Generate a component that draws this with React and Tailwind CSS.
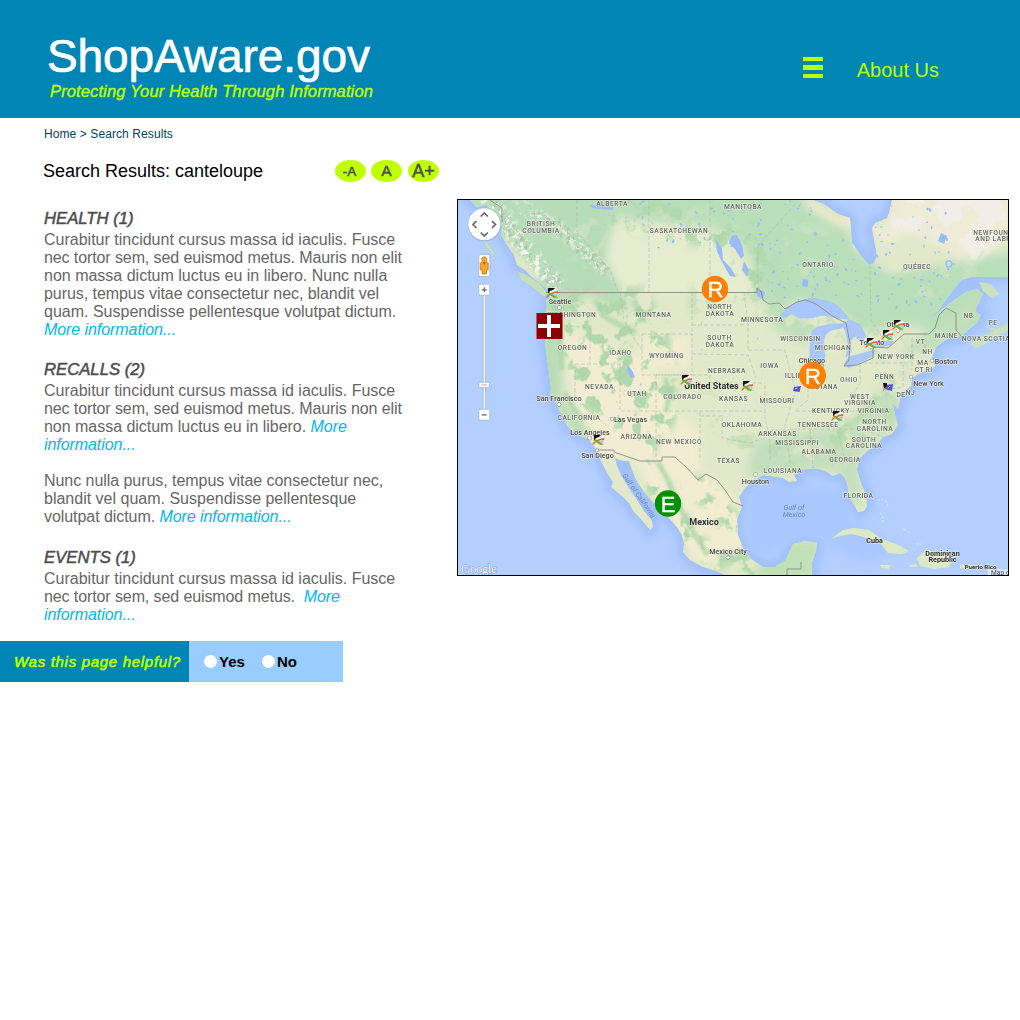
import React from "react";

const STATE_LABELS = [
  ["ALBERTA", 612, 205], ["MANITOBA", 743, 208], ["BRITISH", 541, 225], ["COLUMBIA", 541, 232],
  ["SASKATCHEWAN", 679, 232], ["ONTARIO", 818, 266], ["QUÉBEC", 917, 268.5],
  ["NEWFOUNDLAND", 1003, 234], ["AND LABRADOR", 1003, 240.5],
  ["WASHINGTON", 572, 316], ["OREGON", 572.5, 349.5], ["IDAHO", 620.5, 354.5], ["MONTANA", 653.5, 316.5],
  ["WYOMING", 666.5, 357], ["NORTH", 719.5, 308.5], ["DAKOTA", 720, 315], ["SOUTH", 719.5, 339.5],
  ["DAKOTA", 720, 346], ["MINNESOTA", 762, 321.5], ["WISCONSIN", 800.5, 340], ["MICHIGAN", 833, 349.5],
  ["IOWA", 769.5, 367.5], ["NEBRASKA", 727, 372], ["ILLINOIS", 800, 377], ["INDIANA", 823, 388],
  ["OHIO", 849, 381], ["PENN", 884.5, 378.5], ["NEW YORK", 896, 358.5], ["VT", 920.5, 343.5],
  ["NH", 927.5, 353.5], ["MA", 923, 364], ["CT", 919.5, 371.5], ["RI", 929, 371.5], ["MAINE", 946.5, 337.5],
  ["NB", 968.5, 317], ["PE", 993, 324.5], ["NOVA SCOTIA", 986, 340], ["NEVADA", 599.5, 388.5],
  ["UTAH", 637, 395], ["COLORADO", 682.5, 398.5], ["KANSAS", 733.5, 400.5], ["MISSOURI", 777, 402.5],
  ["CALIFORNIA", 579, 419], ["ARIZONA", 636.5, 438], ["NEW MEXICO", 679, 443.5], ["OKLAHOMA", 742, 426],
  ["ARKANSAS", 777.5, 435], ["TENNESSEE", 818, 426.5], ["KENTUCKY", 831, 412.5], ["WEST", 860, 398],
  ["VIRGINIA", 860, 404.5], ["VIRGINIA", 873.5, 412.5], ["NORTH", 874.5, 423.5], ["CAROLINA", 875, 430],
  ["SOUTH", 864, 441], ["CAROLINA", 864, 447.5], ["MISSISSIPPI", 797, 444], ["ALABAMA", 819, 453.5],
  ["GEORGIA", 845, 461.5], ["TEXAS", 728.5, 462.5], ["LOUISIANA", 783, 472], ["FLORIDA", 858.5, 497],
  ["DE", 901, 396], ["NJ", 910.5, 394.5],
];

const CITY_LABELS = [
  ["Seattle", 560, 303.5, 559.5, 307.5], ["San Francisco", 559, 401, 559, 404.5], ["Las Vegas", 630.5, 421.5, 612, 419],
  ["Los Angeles", 590, 434.5, 589.5, 438], ["San Diego", 597.5, 458, 597, 450], ["Chicago", 812, 362.5, 822, 366],
  ["Toronto", 872, 344.5, 872, 347], ["Ottawa", 898, 326.5, 898, 330.5], ["Boston", 946, 363.5, 932, 361],
  ["New York", 928.5, 385.5, 911, 377], ["Houston", 755.5, 483.5, 755.5, 474.5], ["Mexico City", 728, 554, 728, 557.5],
];

const FLAGS = [[552, 293], [686, 380], [747, 386], [898, 325], [887, 335], [871, 343], [598, 440], [837, 416]];

function seeded(seed) {
  let s = seed;
  return () => {
    s = (s * 16807) % 2147483647;
    return s / 2147483647;
  };
}

function scatter(seed, count, x, y, w, h, min, max) {
  const r = seeded(seed);
  return Array.from({ length: count }, () => [x + r() * w, y + r() * h, min + r() * (max - min), min * 0.6 + r() * (max - min) * 0.5, r() * 180]);
}

const LAKES = [
  ...scatter(31, 60, 640, 200, 180, 50, 0.7, 2.2),
  ...scatter(77, 50, 770, 240, 100, 65, 0.7, 2),
  ...scatter(119, 60, 875, 205, 80, 105, 0.7, 2.1),
  ...scatter(401, 10, 640, 310, 150, 100, 0.5, 1.3),
];

function Blobs({ items, fill, opacity = 1 }) {
  return (
    <g fill={fill} opacity={opacity}>
      {items.map(([x, y, rx, ry, a], i) => (
        <ellipse key={i} cx={x} cy={y} rx={rx} ry={ry} transform={`rotate(${a} ${x} ${y})`} />
      ))}
    </g>
  );
}

/* Speckled fill: noise in one colour, kept inside the softened shape it is applied to. */
function Speckle({ id, frequency, seed, rgb, gain, cut, blur }) {
  const [r, g, b] = rgb.map((v) => v / 255);
  return (
    <filter id={id} x="-10%" y="-10%" width="120%" height="120%" colorInterpolationFilters="sRGB">
      <feTurbulence type="fractalNoise" baseFrequency={frequency} numOctaves="4" seed={seed} result="n" />
      <feColorMatrix in="n" type="matrix" values={`0 0 0 0 ${r} 0 0 0 0 ${g} 0 0 0 0 ${b} ${gain} 0 0 0 ${-cut}`} result="c" />
      <feGaussianBlur in="SourceAlpha" stdDeviation={blur} result="m" />
      <feComposite in="c" in2="m" operator="in" />
    </filter>
  );
}

const LAND =
  "M470 200L477 207L486 205L493 211L499 219L502 228L501 235L507 245L514 255L517 265L525 270L532 277L541 284L548 290L553 292L549 298L546 300L547 307L545 315L546 330L545 343L547 357L549 372L551 388L550 394L555 402L559 410L564 418L567 426L577 435L588 439L593 445L598 454L602 463L607 473L613 482L611 487L617 492L624 498L629 503L634 512L640 518L646 525L650 530L653 527L652 521L644 511L637 500L630 490L622 477L617 466L615 458L623 461L629 461L632 470L636 480L643 491L651 500L658 508L669 518L677 527L682 535L684 544L683 552L690 560L703 567L716 571L727 576L812 576L812 562L816 551L817 543L805 541L793 544L790 551L785 561L775 567L763 567L751 559L743 548L738 535L737 519L742 507L739 497L745 488L753 481L763 475L776 477L783 478L789 482L797 481L794 475L800 470L808 469L819 469L827 472L833 476L840 473L845 478L848 487L848 495L853 503L858 512L864 511L867 506L866 495L861 483L857 470L859 459L867 451L876 446L883 437L892 434L898 425L895 415L893 404L898 409L901 395L911 386L912 378L920 373L932 369L935 366L932 358L936 347L944 341L950 337L961 337L969 329L977 323L981 315L975 311L979 302L983 294L977 289L966 292L950 303L935 315L926 321L938 311L948 297L961 280L971 277L1009 277L1009 200L892 200L889 213L887 218L875 223L872 228L874 240L877 256L874 263L869 265L862 257L852 243L850 218L838 214L824 204L813 200Z";

function GoogleMap() {
  return (
    <svg viewBox="458 200 550 375" width="550" height="375" className="block">
      <defs>
        <clipPath id="land"><path d={LAND} /></clipPath>
        <filter id="soft" x="-30%" y="-30%" width="160%" height="160%" colorInterpolationFilters="sRGB"><feGaussianBlur stdDeviation="4" /></filter>
        <filter id="fine" x="-5%" y="-5%" width="110%" height="110%" colorInterpolationFilters="sRGB"><feGaussianBlur stdDeviation="1.6" /></filter>
        <filter id="shelf" x="-10%" y="-10%" width="120%" height="120%" colorInterpolationFilters="sRGB"><feGaussianBlur stdDeviation="3.5" /></filter>
        <Speckle id="woods" frequency="0.06" seed={4} rgb={[176, 216, 172]} gain={9} cut={4.7} blur={4} />
        <Speckle id="meadow" frequency="0.05" seed={9} rgb={[227, 234, 200]} gain={8} cut={4.5} blur={5} />
        <Speckle id="snow" frequency="0.2" seed={2} rgb={[243, 243, 240]} gain={9} cut={4.6} blur={3} />
        <Speckle id="snowShade" frequency="0.24" seed={12} rgb={[166, 186, 163]} gain={9} cut={5.2} blur={3} />
        <Speckle id="tundra" frequency="0.05" seed={21} rgb={[240, 238, 230]} gain={14} cut={6} blur={3} />
      </defs>
      <rect x="458" y="200" width="550" height="375" fill="#b3cfff" />
      <path d={LAND} fill="none" stroke="#a2c1f8" strokeWidth="13" filter="url(#shelf)" />
      <path d="M745 500Q755 480 790 488L845 490L855 520L900 550L870 562L800 535L770 555L745 545Z" fill="#a9c8fd" filter="url(#soft)" />
      <path d={LAND} fill="#e1e9ca" />
      <g clipPath="url(#land)">
        <g filter="url(#soft)">
          <path d="M445 185L612 185L618 215L608 240L605 262L622 290L628 312L610 308L596 297L575 298L562 305L560 325L562 400L556 400L540 395L538 270Z" fill="#b7dcb8" />
          <path d="M610 185L830 185L855 250L890 275L1020 250L1020 340L962 345L915 325L860 330L840 310L800 300L770 312L757 290L752 262L742 245L710 226L660 222L610 215Z" fill="#b9deba" />
          <path d="M612 226L660 232L715 236L742 265L752 285L745 296L625 292L608 262Z" fill="#e6edcf" />
          <path d="M805 200L838 220L852 226" fill="none" stroke="#efe9cd" strokeWidth="11" />
          <path d="M870 232L890 222L895 190L1020 190L1020 225L990 236L975 258L960 262L945 246L930 243L910 232L885 245Z" fill="#eeebd6" />
          <path d="M562 330L580 335L612 342L620 360L640 350L660 385L672 410L700 430L700 470L736 500L742 545L700 565L660 505L635 460L600 455L575 405Z" fill="#f2edd2" />
          <path d="M640 335L690 335L690 368L648 370Z" fill="#f1ecd0" />
          <path d="M545 300L556 314L559 340L556 372L562 400L593 435L580 441L548 400Z" fill="#b9dcb5" />
          <path d="M762 300L795 315L810 325L808 345L775 330Z" fill="#bfdfbb" />
          <path d="M755 440L850 425L885 385L900 400L895 425L858 455L862 510L850 500L838 470L745 475Z" fill="#c3dfbc" />
          <path d="M898 355L945 318L965 300L980 290L975 325L935 350Z" fill="#c0dfba" />
          <path d="M785 540L820 540L815 580L742 580L755 570Z" fill="#c2e0b6" />
        </g>
        <g filter="url(#woods)" stroke="#000" fill="none">
          <path d="M560 300L640 298L660 340L665 380L668 415L650 440L590 400L575 360Z" fill="#000" strokeWidth="20" />
          <path d="M690 300L760 300L900 350L880 420L770 460L700 400" strokeWidth="24" opacity=".55" />
          <path d="M640 462L665 500L690 540L725 565M690 480L730 520L735 555L760 572" strokeWidth="20" />
          <path d="M600 205L745 238L760 290" strokeWidth="35" />
        </g>
        <g filter="url(#fine)" fill="none" stroke="#a7d3a6">
          <path d="M553 305L559 320L560 345L562 370" strokeWidth="5" opacity=".7" />
          <path d="M565 393L572 406L584 421" strokeWidth="5" opacity=".75" />
          <path d="M665 378L670 392L666 412M658 462L668 480L676 500L692 530L708 555" strokeWidth="5" opacity=".75" />
          <path d="M595 300L604 316L620 325L636 333M633 300L645 322" strokeWidth="6" opacity=".65" />
          <path d="M838 435L862 415L876 398" strokeWidth="5" opacity=".5" />
        </g>
        <g filter="url(#meadow)">
          <path d="M540 215H610L600 260L560 260ZM560 300L610 320L600 345L560 330Z" opacity=".35" />
          <path d="M750 300L860 340L890 420L850 465L770 460L700 370Z" opacity=".7" />
          <path d="M640 205H740V250H660ZM780 210L830 225L840 290L780 280ZM890 270L1000 240L960 300L910 310Z" opacity=".3" />
        </g>
        <g filter="url(#snow)" fill="none" stroke="#000">
          <path d="M484 196L505 222L522 245L540 268L560 286" strokeWidth="17" />
          <path d="M515 203L548 222L575 240L590 258L606 272" strokeWidth="13" opacity=".75" />
        </g>
        <g filter="url(#snowShade)" fill="none" stroke="#000">
          <path d="M484 196L505 222L522 245L540 268L560 286M530 214L560 228L606 272" strokeWidth="14" opacity=".8" />
        </g>
        <path d="M885 230L905 195H1020V228L975 262L950 235Z" filter="url(#tundra)" />
        <Blobs items={LAKES} fill="#99bcf8" />
        <path d="M731 236L737 235L742 245L744 256L741 259L735 249L729 243ZM716 240L722 248L723 260L731 268L736 277L730 276L722 262L717 251ZM744 261L749 270L747 276L742 270ZM803 279L808 280L808 287L802 286ZM628 366L633 372L635 378L631 377L627 371ZM941 233L947 236L944 244L938 241ZM590 205L614 207L613 210L592 208ZM757 289L765 292L763 299L757 296Z" fill="#99bcf8" />
        <circle cx="949" cy="264" r="3" fill="none" stroke="#99bcf8" strokeWidth="1.4" />
        <ellipse cx="857" cy="246" rx="4.5" ry="2.5" fill="#eeeade" transform="rotate(20 857 246)" />
      </g>
      <path d="M779 317L787 308L797 302L812 298L827 301L838 306L846 315L849 319L837 318L823 315L811 318L799 318L792 313L786 317ZM812 331L818 327L830 324L842 324L842 328L831 330L825 335L823 344L825 356L822 369L814 374L810 366L810 347ZM841 324L850 320L860 325L866 336L861 342L855 336L850 341L851 352L846 357L848 344L846 332ZM844 364L849 357L864 353L875 350L873 356L861 362L849 368ZM875 346L883 341L893 341L891 345L882 347Z" fill="#a9c7fd" stroke="#a0c0f6" strokeWidth=".6" />
      <path d="M517 271L527 275L540 284L548 294L544 297L532 287L521 280ZM482 239L488 243L495 253L494 256L486 247Z" fill="#c5dfba" stroke="#a7cbe0" strokeWidth=".5" />
      <path d="M970 343L978 337L988 334L1008 323L1008 331L993 338L982 346L975 348ZM979 282L991 284L999 294L992 298L983 291ZM984 326L998 329L996 332Z" fill="#cae1bd" />
      <path d="M832 538L843 530L854 528L869 530L882 539L896 544L909 551L902 554L888 553L880 543L864 537L851 534L841 536ZM917 558L926 550L942 553L954 560L948 567L934 569L920 566ZM960 565L972 565L969 569L960 568ZM880 565L891 565L889 569L882 568ZM909 565L916 564L918 567L910 567Z" fill="#dceac4" />
      <path d="M877 500L883 500M885 500L888 504L886 508M880 512L884 520L882 522M903 529L911 533M916 544L922 544" fill="none" stroke="#cfe3d8" strokeWidth="1.2" strokeDasharray="3 1.5" />
      <g fill="none" stroke="#b4bba8" strokeWidth=".8" strokeDasharray="4 2" opacity=".75">
        <path d="M649 200V292M710 200V292M795 204L758 246V292M870 265L871 320L884 340M577 200V232L610 270L618 292M558 325L590 328V364M575 364H628M575 364V397L609 428M620 292L624 320L635 340L642 350M642 334H692V375H642ZM692 292V335M692 325H748M744 292L748 325V350M692 354L748 355L756 378M656 375H710V383M710 383H765M656 375V412M620 364V411H762M656 411V458M700 412V458M700 416H722V438L750 443L765 438M765 385V418L770 439V460M770 430H790M748 350H785L790 372L796 390L785 425L790 463M808 382V400L795 411H890M790 429H865M810 430L813 468M838 430L845 462M860 363V383L850 400M863 363H903V387L885 390M865 430L883 437M912 338V370M925 332V355" />
      </g>
      <g fill="none" stroke="#8e948c" strokeWidth="1">
        <path d="M546 292.5H757V288L761 291L763 300L769 304L779 303L785 309L797 302L806 300L816 304L827 312L834 317L846 323L850 343L849 360L844 366L857 365L873 358V347L888 348L904 334H929L935 328L939 315L946 308L956 313V330L962 337" />
        <path d="M597 450H614V452L640 461H662V457H675L688 469L698 480L706 474L717 480L725 490L733 502L743 506M787 575V569H801V562" />
        <path d="M490 200L502 208V222" />
      </g>
      <g fontFamily='Roboto, "Noto Sans", sans-serif' textAnchor="middle" stroke="#f5f5ea" strokeWidth="1.4" paintOrder="stroke" strokeLinejoin="round" strokeOpacity=".6">
        <g fontSize="6.7" fontWeight="500" letterSpacing=".5" fill="#646966">
          {STATE_LABELS.map(([t, x, y], i) => <text key={i} x={x} y={y + 0.5}>{t}</text>)}
        </g>
        <g fontSize="7.2" fontWeight="500" fill="#484848">
          {CITY_LABELS.map(([t, x, y, cx, cy]) => (
            <g key={t}>
              <circle cx={cx} cy={cy} r="1.7" fill="#fff" stroke="#555" strokeWidth=".9" strokeOpacity="1" />
              <text x={x} y={y + 0.4}>{t}</text>
            </g>
          ))}
        </g>
        <g fontWeight="700" fill="#2a2a2a">
          <text x="711.5" y="389.3" fontSize="9">United States</text>
          <text x="704" y="525" fontSize="9">Mexico</text>
          <text x="874.5" y="543" fontSize="7.2">Cuba</text>
          <text x="942.5" y="555.5" fontSize="7.2">Dominican</text>
          <text x="942.5" y="562" fontSize="7.2">Republic</text>
          <text x="980.5" y="569" fontSize="6">Puerto Rico</text>
        </g>
        <g fontStyle="italic" fontSize="7.2" fill="#6b87b4" strokeOpacity="0">
          <text x="794" y="510">Gulf of</text>
          <text x="794" y="516.5">Mexico</text>
          <text transform="translate(637 497) rotate(55)">Gulf of California</text>
        </g>
      </g>
      <rect x="988" y="569" width="20" height="7" fill="#e6ecf5" opacity=".75" />
      <text x="991" y="574.5" fontFamily="Roboto, sans-serif" fontSize="6.7" fill="#555">Map data</text>
      <text x="461" y="573.3" textLength="36" fontFamily='"Liberation Serif", serif' fontSize="13" fill="#eef4ff" stroke="#8ea5ca" strokeWidth="1" paintOrder="stroke">Google</text>

      {FLAGS.map(([x, y], i) => (
        <g key={i} transform={`translate(${x} ${y})`}>
          <path d="M-4-5L5-4L6-1L4 4L-1 5L-4 1Z" fill="#f3f5f5" />
          <path d="M-4-5L3-5L1-3L-2-2L-4 1Z" fill="#111" />
          <path d="M-6 4.5Q-3-1 6-2V0Q-1 0-4.5 4.5Z" fill="#f0602f" />
          <path d="M-3-1L6 4.5L2 5L-4 1Z" fill="#6fb32c" />
          <path d="M1 1L6 0L5 3.5Z" fill="#a7c9e8" />
        </g>
      ))}
      <g fill="#5454c8">
        <path d="M794 387L801 386L799.5 392L793 391ZM886 385L893 384L892 391L885 389Z" />
        <path d="M883 383H887V386L884 389Z" fill="#111" />
        <path d="M883 391L885 388" stroke="#f0602f" />
        <path d="M795 389L797.5 388M888 388L890 386" stroke="#c5c9ff" />
        <path d="M792 393L800 392.5L799 395L791 395Z" fill="#e4e4ec" />
      </g>
      <rect x="536.5" y="313" width="26" height="26" fill="#8b0000" />
      <path d="M547 315h4v9h9v4h-9v9h-4v-9h-9v-4h9z" fill="#fff" />
      <g fontFamily='"Liberation Sans", Arial, sans-serif' fontSize="22" textAnchor="middle" fill="#fff" stroke="#fff" strokeWidth=".35">
        <circle cx="715" cy="289" r="13.2" fill="#ff8000" stroke="none" /><text x="715.5" y="297">R</text>
        <circle cx="812.5" cy="375.5" r="13.5" fill="#ff8000" stroke="none" /><text x="813" y="384">R</text>
        <circle cx="668" cy="503.5" r="13.2" fill="#009000" stroke="none" /><text x="668" y="511.5">E</text>
      </g>
      <circle cx="484.3" cy="224.8" r="16.5" fill="#7f98bf" opacity=".55" />
      <circle cx="484.3" cy="224.3" r="16" fill="#fff" />
      <path d="M480.8 216.5L484.3 213L487.8 216.5M480.8 232.5L484.3 236L487.8 232.5M476.5 221L473 224.5L476.5 228M492 221L495.5 224.5L492 228" fill="none" stroke="#666" strokeWidth="1.7" />
      <g fill="#fff" stroke="#9dabc3" strokeWidth=".7">
        <rect x="483.2" y="294" width="2.4" height="116" />
        <rect x="478.8" y="254.6" width="11" height="22" rx="1.3" />
        <rect x="478.8" y="284.2" width="11" height="11" rx="1.3" />
        <rect x="478.8" y="409.2" width="11" height="11" rx="1.3" />
        <rect x="479" y="382.3" width="10.5" height="5.3" rx="1" />
      </g>
      <path d="M481.8 289.8h5M484.3 287.3v5M481.8 414.8h5" stroke="#666" strokeWidth="1.2" />
      <path d="M481.5 385h5.5" stroke="#aaa" strokeWidth="1" />
      <path d="M484.3 256.8a2.6 2.6 0 0 1 1.8 4.5L488.2 263V270H486.5V274H482V270H480.3V263L482.5 261.3A2.6 2.6 0 0 1 484.3 256.8Z" fill="#f4a629" stroke="#bf7416" strokeWidth=".7" />
      <path d="M482.5 262h3.7l-1.9 3z" fill="#cc5d21" />
    </svg>
  );
}

const More = ({ children }) => <a href="#" className="italic tracking-[-0.07px] text-[#00b7f4]">{children}</a>;
const Tight = ({ children }) => <span className="tracking-[-0.1px]">{children}</span>;
const Heading = ({ children }) => (
  <h2 className="h-[21px] text-[16.7px] leading-[21px] italic text-[#4d4d4d] [-webkit-text-stroke:0.5px]">{children}</h2>
);

export default function App() {
  return (
    <div className="min-h-[1020px] w-[1020px] bg-white font-['Liberation_Sans',Arial,sans-serif] whitespace-nowrap">
      <header className="flex h-[118px] justify-between bg-[#0085b4]">
        <div className="pt-[28px] pl-[47px]">
          <h1 className="h-[54px] text-[46px] leading-[57px] tracking-[-0.08px] text-white [-webkit-text-stroke:0.7px]">ShopAware.gov</h1>
          <p className="pl-[3px] text-[16.5px] leading-[18px] tracking-[0.12px] italic text-[#bfff00] [-webkit-text-stroke:0.4px]">Protecting Your Health Through Information</p>
        </div>
        <nav className="flex items-start pt-[57px] pr-[81px]">
          <div className="flex w-[20px] flex-col gap-[4px]">
            <span className="h-[4.3px] bg-[#bfff00]" />
            <span className="h-[4.3px] bg-[#bfff00]" />
            <span className="h-[4.3px] bg-[#bfff00]" />
          </div>
          <a href="#" className="ml-[34px] text-[20px] leading-[26px] text-[#bfff00]">About Us</a>
        </nav>
      </header>
      <main className="flex h-[523px]">
        <section className="w-[457px] pl-[44px]">
          <p className="pt-[8px] text-[12px] leading-[16px] tracking-[0.09px] text-[#00425c]">Home &gt; Search Results</p>
          <div className="mt-[18px] flex h-[22px] items-center">
            <h3 className="-ml-[1px] w-[292px] text-[18px] leading-[22px] text-black">Search Results: canteloupe</h3>
            <div className="flex gap-[5.5px] text-[#4d4d4d] [-webkit-text-stroke:0.5px]">
              <button className="h-[22px] w-[31px] rounded-[50%] bg-[#bfff00] pt-[2px] pr-[2px] text-[13.5px] leading-[20px]">-A</button>
              <button className="-ml-[0.5px] h-[22px] w-[31px] rounded-[50%] bg-[#bfff00] text-[15.5px] leading-[22px]">A</button>
              <button className="ml-[0.5px] h-[22px] w-[31px] rounded-[50%] bg-[#bfff00] text-[18px] leading-[22px]">A+</button>
            </div>
          </div>
          <div className="mt-[26px] text-[16px] leading-[18px] text-[#666]">
            <Heading>HEALTH (1)</Heading>
            <p className="pt-[2px]">
              Curabitur tincidunt cursus massa id iaculis. Fusce<br /><Tight>nec tortor sem, sed euismod metus. Mauris non elit</Tight><br />
              non massa dictum luctus eu in libero. Nunc nulla<br /><span className="tracking-[-0.06px]">purus, tempus vitae consectetur nec, blandit vel</span><br />
              quam. Suspendisse pellentesque volutpat dictum.<br /><More>More information...</More>
            </p>
            <div className="mt-[20px]"><Heading>RECALLS (2)</Heading></div>
            <p className="pt-[2px]">
              Curabitur tincidunt cursus massa id iaculis. Fusce<br /><Tight>nec tortor sem, sed euismod metus. Mauris non elit</Tight><br />
              <span className="tracking-[-0.03px]">non massa dictum luctus eu in libero. </span><More>More<br />information...</More>
            </p>
            <p className="mt-[18px]">
              <span className="tracking-[-0.05px]">Nunc nulla purus, tempus vitae consectetur nec,</span><br />blandit vel quam. Suspendisse pellentesque<br />
              <span className="tracking-[-0.06px]">volutpat dictum. </span><More>More information...</More>
            </p>
            <div className="mt-[21px]"><Heading>EVENTS (1)</Heading></div>
            <p className="pt-[2px]">
              Curabitur tincidunt cursus massa id iaculis. Fusce<br /><Tight>nec tortor sem, sed euismod metus.&nbsp; </Tight><More>More<br />information...</More>
            </p>
          </div>
        </section>
        <section className="mt-[81px] h-[377px] w-[552px] overflow-hidden border border-black">
          <GoogleMap />
        </section>
      </main>
      <footer className="flex h-[41px] w-[343px] bg-[#99ccff] text-[15px] leading-[41px]">
        <div className="w-[189px] bg-[#0085b4] pl-[14px] tracking-[0.7px] italic text-[#bfff00] [-webkit-text-stroke:0.6px]">Was this page helpful?</div>
        <div className="flex items-center pl-[15px] font-bold text-black">
          <span className="mr-[2px] size-[13px] rounded-full bg-white" />
          <span className="w-[43px]">Yes</span>
          <span className="mr-[2px] size-[13px] rounded-full bg-white" />
          <span>No</span>
        </div>
      </footer>
    </div>
  );
}
